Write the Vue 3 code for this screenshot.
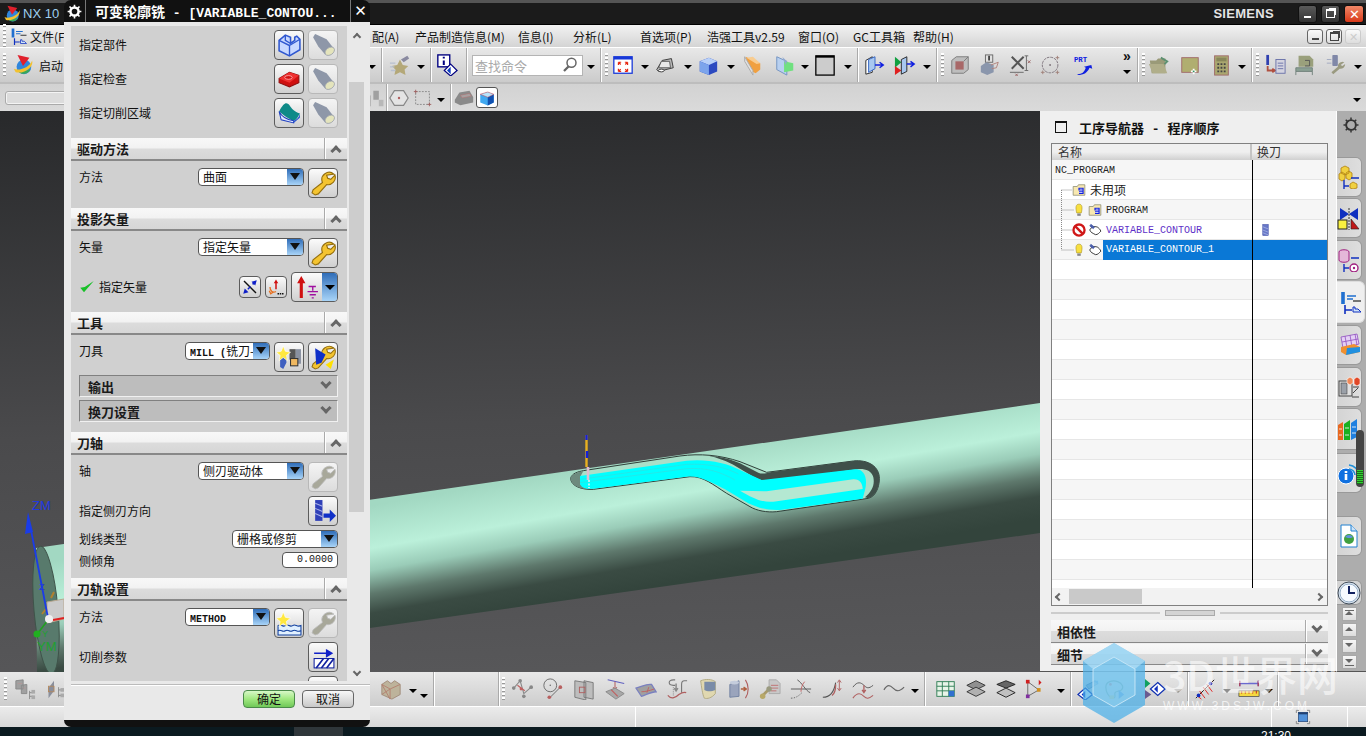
<template>
  <div class="app">
    <div class="top-strip"></div>
    <div class="titlebar">
      <svg class="nx-logo" viewBox="0 0 24 24" v-html="icons.logo"></svg>
      <span class="nx-name">NX 10</span>
      <span class="siemens">SIEMENS</span>
      <span class="win-btn"><i class="w-min"></i></span>
      <span class="win-btn"><i class="w-max"></i></span>
      <span class="win-btn close">✕</span>
    </div>

    <div class="menubar">
      <span class="ti handle tiw8"></span>
      <svg class="menu-ic" viewBox="0 0 24 24" v-html="icons.tabOps"></svg>
      <span v-for="m in menus" :key="m.t" class="menu-item" :style="{ width: m.w + 'px' }">{{ m.t }}</span>
      <span class="doc-btns">
        <span class="doc-btn"><i class="w-min dark"></i></span>
        <span class="doc-btn"><i class="w-max dark"></i></span>
        <span class="doc-btn off">✕</span>
      </span>
    </div>

    <div v-for="bar in topBars" :key="bar.cls" class="toolbar" :class="bar.cls">
      <span v-for="(it, i) in bar.items" :key="i" class="ti" :class="it.k" :style="{ width: it.w + 'px' }">
        <svg v-if="it.k === 'icon' || it.k === 'active'" viewBox="0 0 24 24" v-html="icons[it.n]"></svg>
        <template v-else-if="it.k === 'label'">{{ it.n }}</template>
        <template v-else-if="it.k === 'search'">
          查找命令
          <svg viewBox="0 0 24 24" v-html="icons.lens"></svg>
        </template>
        <template v-else-if="it.k === 'more'"><b>»</b><i class="caret-i"></i></template>
      </span>
    </div>

    <div class="main">
      <div class="viewport">
        <svg class="scene" viewBox="0 111 1040 561">
          <defs>
            <linearGradient id="cyl" gradientUnits="userSpaceOnUse" x1="540" y1="476" x2="562" y2="602">
              <stop offset="0" stop-color="#a2d8c2" />
              <stop offset=".33" stop-color="#bbf0da" />
              <stop offset=".5" stop-color="#9accb8" />
              <stop offset=".68" stop-color="#5e786c" />
              <stop offset=".83" stop-color="#3a4b43" />
              <stop offset="1" stop-color="#33443c" />
            </linearGradient>
          </defs>
          <path d="M36 548L1040 403V533L370 628L37 680Z" fill="url(#cyl)" />
          <ellipse cx="46" cy="610" rx="12" ry="64" transform="rotate(-5 46 610)" fill="#587a6c" stroke="#3f544a" />
          <g transform="translate(540 420) scale(.33333)">
            <path d="M92 175C95 160 115 155 130 152L420 108C480 100 540 105 600 125L680 157L940 123C985 118 1018 140 1018 175C1018 205 1005 230 985 235L710 275C680 278 650 272 630 260L560 220C520 195 490 168 450 170L160 208C125 210 92 198 92 175Z" fill="#a9dfc8" stroke="#2f3e38" stroke-width="3" />
            <path d="M505 107C545 110 575 118 600 130L655 158C668 164 680 158 700 155L940 123C985 118 1018 140 1018 175C1018 205 1005 230 985 235L975 232C995 215 1005 195 1000 172C995 150 970 145 950 148L700 182C675 185 660 180 640 170L590 140C560 122 530 112 505 107Z" fill="#3f504a" />
            <path d="M92 175C95 162 115 156 130 153L122 168L120 192L140 208C115 205 92 195 92 175Z" fill="#6d8a7e" />
            <path d="M120 168L440 122C500 116 560 128 600 150L665 180L945 148C970 146 985 170 975 210L968 236L720 270C680 272 650 262 625 250L555 208C520 190 480 165 440 170L160 206C140 208 122 205 120 190Z" fill="#00ffff" />
            <path d="M120 178L440 133C510 130 555 142 595 162M120 188L440 146C500 142 540 155 585 180" stroke="#58c8c8" stroke-width="1.2" fill="none" />
            <path d="M600 212L680 214L940 178C960 177 968 192 968 207L700 245C665 248 640 235 600 212Z" fill="#b4e8d2" />
          </g>
          <path d="M586.5 435V467" stroke="#e8b020" stroke-width="2.4" />
          <path d="M586.5 435v5M587 451v7" stroke="#1420d8" stroke-width="2.4" />
          <path d="M588 467v13" stroke="#e0bcd0" stroke-width="2.6" />
          <path d="M589 480v8" stroke="#f0f0f0" stroke-width="1.5" stroke-dasharray="2 1.5" />
          <path d="M47 602l17-3v20l-17 4z" fill="#cbcbcb" stroke="#b8a890" />
          <path d="M42 614l4-5M51 598l3-6" stroke="#b08030" stroke-width="2" />
          <path d="M53 620l11-2" stroke="#e02020" stroke-width="2" />
          <path d="M48 618L31 530" stroke="#1a3ce8" stroke-width="1.8" />
          <path d="M28 512l5 20-8 2z" fill="#1a3ce8" />
          <path d="M48 620l-10 13" stroke="#20a020" stroke-width="1.6" />
          <circle cx="37" cy="634" r="3.5" fill="#20b020" />
          <circle cx="49" cy="619" r="4" fill="#f0f0f0" />
          <text x="32" y="510" class="axis-t" fill="#2038e0">ZM</text>
          <text x="39" y="590" class="axis-s" fill="#2038e0">Z</text>
          <text x="42" y="637" class="axis-s" fill="#20a030">Y</text>
          <text x="37" y="651" class="axis-t" fill="#20a030">YM</text>
        </svg>
      </div>

      <div class="nav">
        <div class="nav-title"><i class="nav-pin"></i><b>工序导航器<span class="nav-dash"> - </span>程序顺序</b></div>
        <div class="tree">
          <div class="tree-head"><span class="th-name">名称</span><span class="th-tool">换刀</span></div>
          <div class="tree-body">
            <div v-for="n in 22" :key="n" class="tr"></div>
            <div class="tree-rows">
              <div class="row-t asc">NC_PROGRAM</div>
              <div class="row-t p20"><svg viewBox="0 0 24 24" v-html="icons.folder"></svg><span class="gap4 cn">未用项</span></div>
              <div class="row-t p20"><svg viewBox="0 0 24 24" v-html="icons.bulb"></svg><svg class="ml2" viewBox="0 0 24 24" v-html="icons.folder"></svg><span class="gap4 asc">PROGRAM</span></div>
              <div class="row-t p20"><svg viewBox="0 0 24 24" v-html="icons.nosign"></svg><svg class="ml2" viewBox="0 0 24 24" v-html="icons.opIcon"></svg><span class="gap4 asc purple">VARIABLE_CONTOUR</span><svg class="drill" viewBox="0 0 24 24" v-html="icons.drill"></svg></div>
              <div class="row-t p20"><svg viewBox="0 0 24 24" v-html="icons.bulb"></svg><svg class="ml2" viewBox="0 0 24 24" v-html="icons.opIcon"></svg><span class="sel asc">VARIABLE_CONTOUR_1</span></div>
            </div>
            <svg class="tree-lines" viewBox="0 0 40 100">
              <path d="M9.5 30V90M9.5 30H20M9.5 50H22M9.5 70H20M9.5 90H22" stroke="#8a8a8a" stroke-dasharray="1 1" fill="none" />
            </svg>
            <i class="col-line"></i>
          </div>
          <div class="hscroll"><span class="sb-left"></span><i class="hthumb"></i><span class="sb-right"></span></div>
        </div>
        <div class="splitter"><i></i><span></span><i></i></div>
        <div class="sec acc"><b>相依性</b><span class="sec-btn down"></span></div>
        <div class="sec acc a2"><b>细节</b><span class="sec-btn down"></span></div>
      </div>

      <div class="tabs">
        <svg class="tabs-gear" viewBox="0 0 24 24" v-html="icons.gearDark"></svg>
        <span v-for="t in tabs" :key="t.n" class="tab" :class="{ on: t.on, clock: t.n === 'clock' }" :style="{ height: t.h + 'px', marginTop: t.mt + 'px' }">
          <svg viewBox="0 0 24 24" v-html="icons[t.n]"></svg>
        </span>
        <span v-for="s in tabSteps" :key="s" class="step" :class="s"></span>
      </div>
    </div>

    <div v-for="bar in bottomBars" :key="bar.cls" class="toolbar" :class="bar.cls">
      <span v-for="(it, i) in bar.items" :key="i" class="ti" :class="it.k" :style="{ width: it.w + 'px' }">
        <svg v-if="it.k === 'icon'" viewBox="0 0 24 24" v-html="icons[it.n]"></svg>
      </span>
    </div>

    <div class="status">
      <span class="st s1"></span><span class="st s2"></span>
      <span class="st s3"><svg viewBox="0 0 24 24" v-html="icons.winSmall"></svg></span>
    </div>
    <div class="taskbar"><i class="task-tab"></i><span class="clock-t">21:30</span></div>

    <!-- floating dialog over the graphics window -->
    <div class="dialog">
      <div class="dlg-head">
        <span class="dlg-gear"><svg viewBox="0 0 24 24" v-html="icons.gearWhite"></svg></span>
        <span class="dlg-title"><span class="dt-cn">可变轮廓铣</span> - [VARIABLE_CONTOU...</span>
        <span class="dlg-close">✕</span>
      </div>
      <div class="dlg-body">
        <div class="dlg-mid">
          <div class="dlg-scroll">
            <div class="group g-first">
              <div class="row mid h31"><span class="lab">指定部件</span><span class="btn"><svg viewBox="0 0 24 24" v-html="icons.part"></svg></span><span class="btn off"><svg viewBox="0 0 24 24" v-html="icons.torch"></svg></span></div>
              <div class="row mid h31"><span class="lab">指定检查</span><span class="btn"><svg viewBox="0 0 24 24" v-html="icons.check"></svg></span><span class="btn off"><svg viewBox="0 0 24 24" v-html="icons.torch"></svg></span></div>
              <div class="row mid h31"><span class="lab">指定切削区域</span><span class="btn"><svg viewBox="0 0 24 24" v-html="icons.area"></svg></span><span class="btn off"><svg viewBox="0 0 24 24" v-html="icons.torch"></svg></span></div>
            </div>

            <div class="sec"><b>驱动方法</b><span class="sec-btn"></span></div>
            <div class="group">
              <div class="row h30"><span class="lab">方法</span><span class="sel-box w106">曲面</span><span class="btn"><svg viewBox="0 0 24 24" v-html="icons.wrench"></svg></span></div>
            </div>

            <div class="sec"><b>投影矢量</b><span class="sec-btn"></span></div>
            <div class="group">
              <div class="row h30"><span class="lab">矢量</span><span class="sel-box w106">指定矢量</span><span class="btn"><svg viewBox="0 0 24 24" v-html="icons.wrench"></svg></span></div>
              <div class="row mid h30">
                <span class="lab"><svg class="tick" viewBox="0 0 24 24" v-html="icons.tick"></svg>指定矢量</span>
                <span class="btn sm"><svg viewBox="0 0 24 24" v-html="icons.reverse"></svg></span>
                <span class="btn sm"><svg viewBox="0 0 24 24" v-html="icons.vecDots"></svg></span>
                <span class="btn split"><svg viewBox="0 0 24 24" v-html="icons.vecPlus"></svg><i class="split-arrow"></i></span>
              </div>
            </div>

            <div class="sec"><b>工具</b><span class="sec-btn"></span></div>
            <div class="group g3">
              <div class="row h30"><span class="lab">刀具</span><span class="sel-box w85"><span class="asc bold">MILL (</span>铣刀-</span><span class="btn"><svg viewBox="0 0 24 24" v-html="icons.toolNew"></svg></span><span class="btn"><svg viewBox="0 0 24 24" v-html="icons.toolEdit"></svg></span></div>
              <div class="sub"><b>输出</b><span class="sec-btn down bare"></span></div>
              <div class="sub"><b>换刀设置</b><span class="sec-btn down bare"></span></div>
            </div>

            <div class="sec"><b>刀轴</b><span class="sec-btn"></span></div>
            <div class="group">
              <div class="row h30"><span class="lab">轴</span><span class="sel-box w106">侧刃驱动体</span><span class="btn off"><svg viewBox="0 0 24 24" v-html="icons.wrenchGrey"></svg></span></div>
              <div class="row mid h30"><span class="lab">指定侧刃方向</span><span class="btn"><svg viewBox="0 0 24 24" v-html="icons.sideDir"></svg></span></div>
              <div class="row h18"><span class="lab">划线类型</span><span class="sel-box w106">栅格或修剪</span></div>
              <div class="row h16"><span class="lab">侧倾角</span><span class="num asc">0.0000</span></div>
            </div>

            <div class="sec"><b>刀轨设置</b><span class="sec-btn"></span></div>
            <div class="group">
              <div class="row h30"><span class="lab">方法</span><span class="sel-box w85"><span class="asc bold">METHOD</span></span><span class="btn"><svg viewBox="0 0 24 24" v-html="icons.methodNew"></svg></span><span class="btn off"><svg viewBox="0 0 24 24" v-html="icons.wrenchGrey"></svg></span></div>
              <div class="row mid h30"><span class="lab">切削参数</span><span class="btn"><svg viewBox="0 0 24 24" v-html="icons.cutParam"></svg></span></div>
              <div class="row h30"><span class="lab"></span><span class="btn"></span></div>
            </div>
          </div>
          <div class="dlg-sb">
            <span class="sb-up"></span>
            <i class="sb-thumb"></i>
            <span class="sb-down"></span>
          </div>
        </div>
        <div class="dlg-foot">
          <span class="act ok">确定</span>
          <span class="act">取消</span>
        </div>
      </div>
    </div>

    <div class="handle-float"><i></i></div>

    <div class="watermark">
      <svg class="wm-logo" viewBox="0 0 62 80">
        <path d="M31 0L62 18V62L31 80L0 62V18Z" fill="#4aaee8" fill-opacity=".72" />
        <path d="M31 14L52 26V52L31 64L10 52V26Z" fill="#8fd0f0" fill-opacity=".6" stroke="#e4f4fc" stroke-opacity=".7" />
        <path d="M31 0L62 18L52 26L31 14L10 26L0 18Z" fill="#bfe6f8" fill-opacity=".6" />
      </svg>
      <div class="wm-text">
        <div class="wm-big">3D世界网</div>
        <div class="wm-small">WWW.3DSJW.COM</div>
      </div>
    </div>
  </div>
</template>

<script setup>
const ic = (n, w) => ({ k: 'icon', n, w })
const gap = (w) => ({ k: 'gap', w })
const caret = { k: 'caret', w: 8 }
const sep = { k: 'sep', w: 2 }
const handle = { k: 'handle', w: 8 }

// widths run from one menu title to the next
const menus = [
  { t: '文件(F)', w: 342 }, { t: '配(A)', w: 43 }, { t: '产品制造信息(M)', w: 103 }, { t: '信息(I)', w: 55 },
  { t: '分析(L)', w: 67 }, { t: '首选项(P)', w: 67 }, { t: '浩强工具v2.59', w: 91 }, { t: '窗口(O)', w: 55 },
  { t: 'GC工具箱', w: 60 }, { t: '帮助(H)', w: 50 }
]

const topBars = [
  {
    cls: 'tb1',
    items: [
      handle, ic('logo', 30), { k: 'label', n: '启动', w: 30 }, gap(300), caret, gap(5), sep,
      ic('star', 34), caret, gap(5), sep, ic('infoDiamond', 30), gap(4), sep, gap(4),
      { k: 'search', w: 111 }, gap(4), caret, gap(5), sep, handle,
      ic('fit', 26), gap(5), caret, ic('shade', 32), gap(3), caret, ic('cube', 32), gap(3), caret,
      ic('clip', 34), ic('section', 32), caret, ic('square', 32), gap(3), caret, gap(5), sep,
      ic('planeArrow', 32), ic('planeArrow2', 28), gap(4), caret, gap(5), sep, handle,
      ic('wireCube', 28), ic('infoBox', 32), ic('measure', 28), ic('circleDots', 34), ic('prt', 32), gap(23),
      { k: 'more', w: 8 }, gap(6), sep, handle,
      ic('folderOpen', 24), ic('rectPlus', 38), ic('calc', 24), gap(5), caret, gap(5), sep, handle,
      ic('listArrow', 28), ic('machine', 32), ic('toolsGrey', 30), gap(3), caret
    ]
  },
  {
    cls: 'tb2',
    items: [
      gap(5), { k: 'input', w: 70 }, gap(293), ic('frag', 18), sep, ic('hex', 22), ic('dotRect', 26), gap(1), caret, gap(5), sep,
      ic('greyBox', 24), { k: 'active', n: 'blueBox', w: 22 }, gap(855), caret
    ]
  }
]

const w31 = ['pts', 'lineCircle', 'planes', 'arrowPlane', 'surfaceArrow', 'sCurve', 'tube', 'cylArrow', 'keyDoc', 'crossCurve', 'curveArrows', 'waveArrow', 'wave']

const bottomBars = [
  {
    cls: 'tb3',
    items: [
      gap(1), handle, ic('blocksTree', 32), ic('toolTree', 26), gap(313), ic('crate', 22), gap(7), caret, gap(3), { k: 'caret low', w: 8 }, gap(5), sep, gap(63), sep,
      { k: 'handle', w: 6 }, ...w31.map((n) => ic(n, 31)), gap(2), caret, gap(5), sep, gap(5),
      ic('table3d', 30), ic('planeStack', 30), ic('planeStack2', 30), ic('nodes', 30), gap(6), caret, gap(5), sep, gap(1),
      ic('sliderDiamond', 30), ic('palette', 24), gap(16), ic('playDiamond', 24), gap(7), { k: 'caret grey', w: 8 }, gap(5), sep,
      ic('hatchLine', 32), gap(2), caret, gap(6), ic('ruler', 24), gap(4), caret, gap(4), sep
    ]
  }
]

const tabs = [
  { n: 'tabAssy', h: 40, mt: 0 }, { n: 'tabMirror', h: 40, mt: 1 }, { n: 'tabGeom', h: 40, mt: 2 },
  { n: 'tabOps', h: 42, mt: 1, on: true }, { n: 'tabMat', h: 40, mt: 2 }, { n: 'tabMach', h: 40, mt: 2 },
  { n: 'tabBooks', h: 42, mt: 1 }, { n: 'tabInfo', h: 40, mt: 3 }, { n: 'tabDoc', h: 40, mt: 23 },
  { n: 'clock', h: 25, mt: 24 }
]
const tabSteps = ['first', 'up', 'down', 'last']

const wrenchPath = 'M22 3a7 7 0 0 0-11 8L2 18l-1 3 3 2 3-1 8-9a7 7 0 0 0 8-9l-4 4-3-1-1-3z'

const icons = {
  logo: '<circle cx="13" cy="14" r="8" fill="#2f86dc"/><path d="M6 18a8 8 0 0 0 14-1c-4 1-9 2-14 1z" fill="#3aa858"/><path d="M2 16C8 19 20 14 22 7c2 7-8 15-18 13z" fill="#f2c230"/><path d="M6 1l13 3-7 9z" fill="#e0202c"/>',
  lens: '<circle cx="14" cy="9" r="6" fill="#fff" stroke="#666" stroke-width="2"/><path d="M10 14l-6 6" stroke="#666" stroke-width="3"/>',
  star: '<path d="M12 6l3 6 6 1-4 4 1 6-6-3-6 3 1-6-4-4 6-1z" fill="#b4a878"/><path d="M13 6l7-4 2 3-6 4z" fill="#8a8aa0"/><path d="M1 10h6M1 14h5M2 18h5" stroke="#b8c0d0" stroke-width="1.5"/>',
  infoDiamond: '<rect x="2" y="1" width="13" height="13" fill="#fff" stroke="#000080" stroke-width="1.5"/><path d="M8.5 3v2M8.5 7v5" stroke="#000080" stroke-width="2.2"/><path d="M16 11l7 7-7 6-7-6z" fill="#fff" stroke="#000080" stroke-width="1.3"/><path d="M16 14v8l-4-4z" fill="#1040c0"/>',
  fit: '<rect x="2" y="3" width="20" height="18" fill="#fff" stroke="#1838d8" stroke-width="1.4"/><rect x="2" y="3" width="20" height="3" fill="#1838d8"/><path d="M7 9l2.5 2.5M7 9v3M7 9h3M17 9l-2.5 2.5M17 9v3M17 9h-3M7 19l2.5-2.5M7 19v-3M7 19h3M17 19l-2.5-2.5M17 19v-3M17 19h-3" stroke="#e82810" stroke-width="1.3" fill="none"/>',
  shade: '<path d="M3 17l6-10 10-2 2 10-16 4z" fill="#bbb" stroke="#333"/><path d="M8 8h9l1 7H5z" fill="#e8e8e8" stroke="#555"/><ellipse cx="8" cy="18" rx="3" ry="1.5" fill="#fff" stroke="#333"/>',
  cube: '<path d="M3 8l10-4 9 4v11l-9 4-10-4z" fill="#2c4ac0"/><path d="M3 8l10-4 9 4-9 4z" fill="#b8d0f8"/><path d="M3 8l10 4v11l-10-4z" fill="#7ca4ec"/>',
  clip: '<path d="M5 3l16 7v7l-5 4-6-3z" fill="#f0a040"/><path d="M6 4L13 3l8 7-4 1z" fill="#f8cc90"/><path d="M4 3l9 15v5l-9-15z" fill="#e0e0e0" stroke="#aaa"/>',
  section: '<path d="M3 3l11 5v15l-11-6z" fill="#b8d0f0" stroke="#7090c0"/><path d="M11 8l10 2v8l-10 2z" fill="#70e080"/><path d="M9 3l5 5-1 4z" fill="#90a8d0"/>',
  square: '<rect x="2" y="2" width="20" height="21" fill="#ccc" stroke="#000" stroke-width="1.4"/><rect x="2" y="2" width="20" height="2" fill="#000"/>',
  planeArrow: '<path d="M2 7l7-4v17l-7 2z" fill="#fff" stroke="#222"/><path d="M5 6l7-3v13l-7 4z" fill="#a8c8f0" stroke="#3060c0"/><path d="M12 12h8M17 9l4 3-4 3" stroke="#1020e0" stroke-width="1.6" fill="none"/>',
  planeArrow2: '<path d="M1 3l7 6-7 6z" fill="#10a040"/><path d="M1 13l7 5-7 5z" fill="#e02020"/><path d="M8 6l6-3v16l-6 3z" fill="#a8c8f0" stroke="#222"/><path d="M14 11h8M18 8l4 3-4 3" stroke="#1020e0" stroke-width="1.6" fill="none"/>',
  wireCube: '<path d="M3 7l5-4h13v14l-5 4H3z" fill="#bdbdbd" stroke="#7a7a7a"/><path d="M7 8h9v9H7z" fill="#a86868"/><path d="M16 8l5-5" stroke="#7a7a7a"/>',
  infoBox: '<rect x="7" y="1" width="8" height="8" fill="#e0e0e0" stroke="#666"/><path d="M11 2v5" stroke="#444" stroke-width="2"/><path d="M2 13l6-4 8 3v8l-7 3-7-3z" fill="#8a96ac"/><path d="M13 12l8-3-2 6-5 1" fill="none" stroke="#b08078"/>',
  measure: '<path d="M3 3l13 13M16 3L3 16" stroke="#555" stroke-width="2.2"/><path d="M19 2v16M17 2h4M17 18h4" stroke="#666" fill="none"/><path d="M1 20h15" stroke="#666"/><path d="M20.5 7l3 3M23.5 7l-3 3M7 21.5l2.5 2.5M9.5 21.5L7 24" stroke="#9a6060"/>',
  circleDots: '<circle cx="11" cy="12" r="8.5" fill="none" stroke="#7a7078" stroke-dasharray="3 1"/><circle cx="11" cy="12" r="1" fill="#7a7078"/><path d="M19 2v4M17 4h4M19 18v4M17 20h4M3 18v4M1 20h4" stroke="#a08078"/>',
  prt: '<text x="1" y="9" font-size="8" font-weight="700" fill="#1020e0" font-family="Liberation Mono">PRT</text><path d="M5 22c5 0 7-2 9-7l-2-1 8-2 1 4-3-1c-2 5-6 8-13 8z" fill="#1020e0"/>',
  folderOpen: '<path d="M2 7h7l2-2h8v16H4z" fill="#9a9a78"/><path d="M1 11h16l4 10H5z" fill="#b0ae8a"/><path d="M14 4l7 4-3 3" stroke="#5d9070" stroke-width="2" fill="none"/>',
  rectPlus: '<rect x="3" y="4" width="18" height="16" fill="#b0ae70" stroke="#a06a6a"/><path d="M16 16v6M13 19h6" stroke="#fff" stroke-width="2"/><circle cx="16" cy="19" r="1" fill="#309060"/>',
  calc: '<rect x="5" y="2" width="15" height="21" fill="#aaa770" stroke="#a06a6a"/><rect x="7" y="4" width="11" height="4" fill="#88865a"/><path d="M8 11h9M8 15h9M8 19h9" stroke="#444" stroke-width="2" stroke-dasharray="2 1.5"/>',
  listArrow: '<path d="M4 1v11" stroke="#3040b0" stroke-width="3"/><path d="M4 13v5h7M9 16l3 2-3 2" stroke="#b05040" stroke-width="2" fill="none"/><rect x="13" y="6" width="10" height="15" fill="#d4d4e0" stroke="#6870a8"/><path d="M15 10h6M15 13h6M15 16h6" stroke="#6870a8"/>',
  machine: '<path d="M5 2h12l4 4v8H5z" fill="#9aa07c"/><path d="M2 15h18v4H2zM2 19v4M20 19v4" fill="#8aa094" stroke="#70807a"/><path d="M12 7h5v6h-5" fill="none" stroke="#555"/>',
  toolsGrey: '<rect x="8" y="1" width="6" height="12" rx="1" fill="#8088a8"/><path d="M2 6h5M2 10h5" stroke="#a0a8c0"/><path d="M21 9a5 5 0 0 0-7 5l-7 6 2 2 7-6a5 5 0 0 0 6-5l-3 2-2-1z" fill="#9a9a80"/>',
  frag: '<path d="M8 4h6v10H8zM0 12l5-3v12H0z" fill="#a0a0a0"/><path d="M14 14h5v7h-5z" fill="#b8b8b8"/>',
  hex: '<path d="M7 4h10l5 8-5 8H7l-5-8z" fill="#e4e4e4" stroke="#888" stroke-width="1.3"/><circle cx="12" cy="12" r="1.3" fill="#b06060"/>',
  dotRect: '<rect x="4" y="5" width="15" height="14" fill="none" stroke="#888" stroke-dasharray="2 1.4"/><path d="M4 3v4M2 5h4M19 17v4M17 19h4" stroke="#a06060"/>',
  greyBox: '<path d="M2 14l5-8 11-2 4 7v6l-14 3-6-3z" fill="#8a8a8a"/><path d="M8 9l10-2 2 3-10 2z" fill="#a8a0a0" stroke="#b07070" stroke-width=".6"/>',
  blueBox: '<path d="M3 7l10-3 8 3v11l-8 4-10-4z" fill="#40a8f0"/><path d="M13 11l8-4v11l-8 4z" fill="#1050b0"/><path d="M3 7l10 4 8-4-8-3z" fill="#b8e4fc" stroke="#e03030" stroke-width=".6"/>',
  tabAssy: '<path d="M4 3l4-2 4 2v5l-4 2-4-2zM9 8l3-2 3 2v5l-3 2-3-2zM2 9l3-2 3 2v5l-3 2-3-2z" fill="#f0d040" stroke="#b08010" stroke-width=".8"/><path d="M14 13h8M7 15v9M7 21h5" stroke="#1030c0" stroke-width="1.4" fill="none"/><path d="M13 19l3-2 4 2v4l-4 1-3-1z" fill="#f0d040" stroke="#b08010" stroke-width=".8"/>',
  tabMirror: '<path d="M3 2l9 6-9 6zM21 2l-9 6 9 6z" fill="#1030c0"/><path d="M12 2v22" stroke="#333" stroke-dasharray="2 1"/><rect x="1" y="14" width="9" height="9" fill="#f8f040" stroke="#222"/><path d="M14 23V13l8 10z" fill="#c01818" stroke="#222" stroke-width=".6"/>',
  tabGeom: '<path d="M2 4c0-3 10-3 10 0v8c0 3-10 3-10 0z" fill="#e4b8d8" stroke="#a02080"/><path d="M14 10h8M7 16v8M7 20h5" stroke="#1030c0" stroke-width="1.4" fill="none"/><circle cx="17" cy="20" r="4" fill="#fff" stroke="#a02080" stroke-width="1.4"/><circle cx="17" cy="20" r="1.2" fill="#a02080"/>',
  tabOps: '<path d="M4 2v12" stroke="#2070d0" stroke-width="3.6"/><path d="M8 6h9M8 9h6" stroke="#2070d0" stroke-width="1.6"/><path d="M14 11h8" stroke="#222" stroke-width="1.2"/><path d="M6 15v9M6 20h7" stroke="#1030c0" stroke-width="1.6" fill="none"/><path d="M14 17v5h8l-3-3h-3v-2z" fill="#d0e4f8" stroke="#1030c0" stroke-width="1"/>',
  tabMat: '<path d="M4 4l16-3 2 10-16 4z" fill="#e4d0f4" stroke="#9050c0" stroke-width=".8"/><path d="M8 3l2 12M13 2l2 12M18 1l2 11M5 9l16-3" stroke="#9050c0" stroke-width=".8"/><path d="M4 14l13-3 6 3v5l-14 3-5-3z" fill="#f09030"/><path d="M10 15l13-1v5L9 22z" fill="#2090e0"/>',
  tabMach: '<rect x="2" y="6" width="13" height="15" fill="#e0e0e0" stroke="#444"/><rect x="4" y="8" width="6" height="11" fill="#9aa0a8" stroke="#444" stroke-width=".6"/><path d="M17 4l3-2 3 2v5l-3 2-3-2z" fill="#e04828" stroke="#fff" stroke-width=".6"/><path d="M10 4l3-2 3 2v4l-3 2-3-2z" fill="#f08858" stroke="#fff" stroke-width=".6"/><path d="M16 12h6M16 18l5-5M15 22h7" stroke="#444" fill="none"/>',
  tabBooks: '<path d="M1 8l5-3v18H1z" fill="#e86820"/><path d="M7 7l6-4v20H7z" fill="#18b020"/><path d="M14 6l6-4v18l-6 3z" fill="#2080e0"/><path d="M2 12h3M2 18h3M8 11h4M8 18h4M15 10h4M15 16h4" stroke="#fff" stroke-width=".8"/>',
  tabInfo: '<circle cx="9" cy="15" r="8" fill="#1070e0" stroke="#fff"/><path d="M9 10v2M9 13v6" stroke="#fff" stroke-width="2.6"/><path d="M12 4a11 11 0 0 1 10 10M12 8a7 7 0 0 1 6 6" stroke="#2090d8" stroke-width="1.6" fill="none"/>',
  tabDoc: '<path d="M4 1h10l6 6v16H4z" fill="#fff" stroke="#2080d0"/><path d="M14 1v6h6" fill="#cfe4f8" stroke="#2080d0"/><circle cx="12" cy="15" r="5" fill="#40a040"/><path d="M8 13a5 5 0 0 1 8 0l-2 1h-3z" fill="#6090e0"/>',
  clock: '<circle cx="12" cy="12" r="11" fill="#dbe6f2" stroke="#3f4b58"/><circle cx="12" cy="12" r="9" fill="#f6faff" stroke="#98b0c8"/><path d="M12 5v7h6" stroke="#102060" stroke-width="2" fill="none"/>',
  folder: '<path d="M2 6h7l2-3h11v18H2z" fill="#f8e8b0" stroke="#8a8a70" stroke-width="1.3"/><path d="M13 9h6v9h-6" fill="#fff"/><path d="M12 9h7v3h-7zM12 15h7v3h-7M19 9v9" fill="none" stroke="#1020e0" stroke-width="2"/>',
  bulb: '<path d="M8 17C6 8 6 2 12 2s6 6 4 15z" fill="#f8e040" stroke="#a89020"/><rect x="9" y="18" width="6" height="4" fill="#888"/>',
  nosign: '<circle cx="12" cy="12" r="9.5" fill="#fff" stroke="#d01818" stroke-width="4"/><path d="M5 5l14 14" stroke="#d01818" stroke-width="4"/>',
  opIcon: '<path d="M3 12c2-5 8-7 13-5 2 1 5 4 6 7-3 3-5 6-9 6-4-2-9-4-10-8z" fill="#fff" stroke="#222" stroke-width="1.5"/><path d="M5 2l6 5-2 3-6-5z" fill="#5060b0" stroke="#204090" stroke-width=".8"/>',
  drill: '<rect x="7" y="2" width="10" height="20" fill="#6878c8" stroke="#3040a0"/><path d="M7 6l10 4M7 12l10 4M7 17l10 4" stroke="#c8d0f0"/>',
  gearWhite: '<circle cx="12" cy="12" r="6.5" fill="none" stroke="#fff" stroke-width="4"/><path d="M12 1v4M12 19v4M1 12h4M19 12h4M4 4l3 3M17 17l3 3M4 20l3-3M17 7l3-3" stroke="#fff" stroke-width="2.6"/>',
  gearDark: '<circle cx="12" cy="12" r="6.5" fill="none" stroke="#333" stroke-width="2.6"/><path d="M12 2v3M12 19v3M2 12h3M19 12h3M5 5l2 2M17 17l2 2M5 19l2-2M17 7l2-2" stroke="#333" stroke-width="2"/>',
  part: '<path d="M2 8l6-5 5 2v6l4-3V5l2-1 3 3v10l-10 6-10-5z" fill="#c8d8ff" stroke="#3058d0" stroke-width="1.5"/><path d="M2 8l10 5v10M12 13l10-6M13 11l-5-3V3" fill="none" stroke="#3058d0" stroke-width="1.3"/>',
  check: '<path d="M2 12l10-6 9 3v7l-9 4-10-4z" fill="#d01010" stroke="#901010"/><path d="M2 12l10 4 9-7-9-3z" fill="#f03030"/><ellipse cx="11" cy="11" rx="3.6" ry="1.8" fill="#d01010" stroke="#ffb0b0" stroke-width=".8"/>',
  area: '<path d="M2 11c5-9 7-9 10-6 2 3 4 6 10 8-2 3-3 6-6 7-3-1-8-4-14-9z" fill="#0e8a88"/><path d="M2 11c3 6 8 8 14 9v2L4 19z" fill="#e0e8ff" stroke="#2040c0" stroke-width="1"/><path d="M16 20c3-1 5-3 6-7v4l-6 5z" fill="#3058d0"/>',
  torch: '<path d="M2 5l2-3 11 5 7 9-8 6-7-8z" fill="#8e97a8"/><ellipse cx="18" cy="18.5" rx="5" ry="3.4" transform="rotate(-35 18 18.5)" fill="#e4e4bc" stroke="#a0a6ae" stroke-width=".8"/>',
  wrench: `<path d="${wrenchPath}" fill="#f4c430" stroke="#96700f" stroke-width="1.1"/>`,
  wrenchGrey: `<path d="${wrenchPath}" fill="#a8a89a" stroke="#bcbcbc" stroke-width=".8"/>`,
  tick: '<path d="M3 13l5 6L21 4 9 12z" fill="#18c028"/>',
  reverse: '<path d="M4 4l16 16" stroke="#111" stroke-width="1.8"/><path d="M21 3l-2 7-5-5zM3 21l2-7 5 5z" fill="#1020c8"/><path d="M19 5L5 19" stroke="#1020c8" stroke-width="2" stroke-dasharray="5 4"/>',
  vecDots: '<path d="M12 2l3 5h-2v8h-2V7H9z" fill="#d01010"/><path d="M4 12c0 6 4 8 8 6M3 17l2 4 3-2" stroke="#e87020" stroke-width="1.8" fill="none"/><path d="M14 21h2M17 21h2M20 21h2" stroke="#111" stroke-width="2"/>',
  vecPlus: '<path d="M7 1l4 7H8.5v14h-3V8H3z" fill="#d01010"/><path d="M14 11h7M18 11v4M13 16h10M15 19h6M17 22h2" stroke="#a010a0" stroke-width="1.3" fill="none"/>',
  toolNew: '<path d="M12 4h6v10h-6z" fill="#555"/><path d="M18 4h5v14h-5z" fill="#8890a0"/><rect x="13" y="13" width="7" height="7" fill="#f0b860" stroke="#333"/><path d="M3 10h6v7l-3 6-3-2z" fill="#4060c0"/><path d="M6 1l2 5 5 1-4 3 1 5-4-3-4 3 1-5-4-3 5-1z" fill="#ffe840" stroke="#fff" stroke-width=".6"/>',
  toolEdit: `<path d="${wrenchPath}" fill="#f4c430" stroke="#96700f"/><path d="M4 3l10 6-4 8-5 2z" fill="#1030c8"/><path d="M22 14l-8 5 5 4z" fill="#ffe000"/>`,
  sideDir: '<rect x="4" y="1" width="7" height="20" fill="#3040b8"/><path d="M4 4l7 3M4 9l7 3M4 14l7 3" stroke="#a8b0e8"/><path d="M12 14h6v-4l6 6-6 6v-4h-6z" fill="#1030c8"/>',
  methodNew: '<path d="M1 14c3-2 4 2 7 0s4 2 7 0 4 2 8 0v9H1z" fill="#e0f0ff" stroke="#1040a0"/><path d="M1 19c3-2 4 2 7 0s4 2 7 0 4 2 8 0" fill="none" stroke="#1040a0"/><path d="M6 1l2 5 5 1-4 3 1 5-4-3-4 3 1-5-4-3 5-1z" fill="#ffe840" stroke="#fff" stroke-width=".6"/>',
  cutParam: '<path d="M3 8h16M15 5l5 3-5 3z" stroke="#1020c8" stroke-width="1.4" fill="#1020c8"/><rect x="3" y="13" width="19" height="9" fill="#fff" stroke="#1020a0"/><path d="M5 22l7-9M10 22l7-9M15 22l7-9" stroke="#1020a0" stroke-width="1.6"/>',
  winSmall: '<path d="M2 6V2h4M18 2h4v4M22 18v4h-4M6 22H2v-4" stroke="#888" fill="none" stroke-width="1.4"/><rect x="5" y="5" width="14" height="14" fill="#5090d8" stroke="#204070"/><rect x="5" y="5" width="14" height="3" fill="#204070"/>',
  blocksTree: '<path d="M2 3l8-1v10H2zM8 8l6-1v10H8z" fill="#a0a0a0" stroke="#888"/><path d="M4 6h5M10 11h3" stroke="#b09898"/><path d="M17 14v9M17 16h4M17 20h4" stroke="#888" fill="none"/><rect x="19" y="13" width="4" height="4" fill="#aaa"/><rect x="19" y="19" width="4" height="4" fill="#aaa"/>',
  toolTree: '<path d="M6 11l6-8v11l-6 8z" fill="#8a8f9c"/><rect x="6" y="9" width="6" height="6" fill="none" stroke="#b08860"/><path d="M17 10v11M17 13h4M17 19h4" stroke="#888" fill="none"/><rect x="19" y="11" width="4" height="4" fill="#aaa"/><rect x="19" y="17" width="4" height="4" fill="#aaa"/>',
  crate: '<path d="M2 7l6-4 4 3 4-3 6 4v11l-9 5-11-5z" fill="#bdb39b" stroke="#a08a78"/><path d="M2 7l9 5v11M11 12l11-5M2 7l9 16M2 18l9-6" fill="none" stroke="#b48070"/>',
  pts: '<path d="M3 11l7-8 4 14 8-7" fill="none" stroke="#888" stroke-width="1.2"/><path d="M7 8l8 6" stroke="#c06060" stroke-width="1.3"/><circle cx="3" cy="11" r="2" fill="#888"/><circle cx="10" cy="3" r="2" fill="#888"/><circle cx="14" cy="20" r="2" fill="#888"/><circle cx="22" cy="10" r="2" fill="#888"/><circle cx="11" cy="12" r="1.6" fill="#c06060"/>',
  lineCircle: '<circle cx="9" cy="8" r="7" fill="none" stroke="#666"/><circle cx="9" cy="8" r=".8" fill="#666"/><path d="M8 22l12-12" stroke="#666"/><circle cx="8" cy="21" r="2" fill="#b86060"/><circle cx="20" cy="10" r="2" fill="#b86060"/>',
  planes: '<path d="M2 3l12 2v19l-12-3zM12 3l10 2v18l-10-2z" fill="#bdbdbd" stroke="#777"/><rect x="7" y="10" width="6" height="6" fill="none" stroke="#b06060"/>',
  arrowPlane: '<path d="M4 2l18 4" stroke="#6060c0" stroke-width="1.2"/><path d="M12 4v8M10 10l2 3 2-3" stroke="#b05050" fill="none"/><path d="M2 15l10-4 10 6-9 6z" fill="#a8a8a8" stroke="#888"/><path d="M8 13l7 7" stroke="#c06060" stroke-width="1.3"/>',
  surfaceArrow: '<path d="M1 11c7-2 12-5 17-4l5 8c-5 0-10 3-16 5z" fill="#a0a0a0" stroke="#7a80c0" stroke-width="1.4"/><path d="M7 15c4 0 8-1 14-3M13 16l2-6" stroke="#c06060" fill="none"/>',
  sCurve: '<path d="M8 2c-6 0-6 6 0 6M8 2h2M8 8h2M20 3c-3 0-3 2-3 4v9M23 3h-3" fill="none" stroke="#777" stroke-width="1.2"/><path d="M2 19c4 5 9 2 12-1 3-2 6-3 8-2" fill="none" stroke="#b06060" stroke-width="1.4"/><path d="M11 6v7M9 11l2 3 2-3" stroke="#888" fill="none" stroke-width="1.6"/><path d="M8 10v9" stroke="#888" stroke-dasharray="1 1"/>',
  tube: '<path d="M4 3c5-2 12-2 16 1v13c-4 5-9 6-12 5-2-4-3-12-4-19z" fill="#e0d8b0" stroke="#b0a880"/><path d="M8 4h12v9c-4 2-9 2-12 0z" fill="#7a8ca8"/>',
  cylArrow: '<path d="M2 7l10-4v17l-10 1z" fill="#9aa4bc" stroke="#7080a0"/><ellipse cx="7" cy="5" rx="5" ry="2" fill="#c4ccdc"/><path d="M14 12h5M17 10l3 2-3 2" stroke="#b06040" stroke-width="1.5" fill="none"/><path d="M19 2c4 6 4 14 0 20" stroke="#b06060" stroke-width="1.2" fill="none"/>',
  keyDoc: '<path d="M11 2h8l4 4v11H11z" fill="#c8c8c8" stroke="#aaa"/><path d="M13 8h8M13 11h8M13 14h6" stroke="#c07070"/><path d="M10 13l-6 6" stroke="#a89a6a" stroke-width="3"/><circle cx="4" cy="20" r="3" fill="#b8a868"/><circle cx="11" cy="12" r="3" fill="#9a9a80"/>',
  crossCurve: '<path d="M1 12h22" stroke="#555"/><path d="M8 2c5 3 9 12 14 14" fill="none" stroke="#555"/><path d="M16 4c-3 3-4 8-4 11" fill="none" stroke="#c06060"/><path d="M1 22c5 0 8-2 12-6" fill="none" stroke="#666" stroke-dasharray="1.5 1.5"/>',
  curveArrows: '<path d="M2 21c6 0 12-4 14-16" fill="none" stroke="#555" stroke-width="1.2"/><path d="M12 19c3-2 4-5 4-12" fill="none" stroke="#b06060" stroke-width="1.4"/><path d="M20 3v10M18 5l2-3 2 3M18 11l2 3 2-3" fill="none" stroke="#b06060"/>',
  waveArrow: '<path d="M1 10c5-7 9-5 12-2s5 4 10 0" fill="none" stroke="#555"/><path d="M1 22c5-7 9-5 12-2s5 3 10-1" fill="none" stroke="#b06060" stroke-width="1.2"/><path d="M13 8v8M11 13l2 3 2-3" stroke="#b06060" stroke-width="1.4" fill="none"/>',
  wave: '<path d="M1 13c4-7 7-5 10-2s6 5 12-1" fill="none" stroke="#666" stroke-width="1.3"/>',
  table3d: '<rect x="2" y="4" width="19" height="16" fill="#e8f4e8" stroke="#2e7d54"/><path d="M2 9h19M2 14h19M8 4v16M15 4v16" stroke="#2e7d54"/><rect x="15" y="14" width="6" height="6" fill="#3070d0"/>',
  planeStack: '<path d="M2 8l10-5 10 5-10 5z" fill="#909090" stroke="#333"/><path d="M2 15l10-5 10 5-10 5z" fill="#b0b0b0" stroke="#333"/>',
  planeStack2: '<path d="M2 7l10-4 10 4-10 4z" fill="#666" stroke="#222"/><path d="M2 16l10-5 10 5-10 5z" fill="#c0c0c0" stroke="#222"/>',
  nodes: '<path d="M3 4l12 9M3 4v16M3 20l12-7" stroke="#666" fill="none"/><rect x="1" y="2" width="4" height="4" fill="#d02020"/><rect x="13" y="11" width="4" height="4" fill="#d09020"/><rect x="1" y="18" width="4" height="4" fill="#8030a0"/><path d="M15 2l3 3-3 3z" fill="#d02020"/>',
  sliderDiamond: '<path d="M10 8l10-5 3 3-10 6z" fill="#9ab0c8" stroke="#6888a8"/><path d="M18 3h5v4" fill="#3080d0"/><path d="M9 11l8 7-8 6-8-6z" fill="#fff" stroke="#1030b0" stroke-width="1.4"/><path d="M9 14v8l-4-4z" fill="#1030c0"/>',
  palette: '<path d="M2 10c0-6 7-8 13-6 5 2 7 6 4 9-2 2-6 1-7 3s2 6-3 6C5 21 2 15 2 10z" fill="none" stroke="#508060" stroke-width="1.3"/><circle cx="7" cy="7" r="1.5" fill="#e04030"/><path d="M16 13l6 5-6 5z" fill="#1060d0"/><rect x="6" y="19" width="5" height="4" fill="#e8c040"/>',
  playDiamond: '<path d="M1 1l6 5-6 5z" fill="#10a060"/><path d="M1 13l7 5-7 5z" fill="#6a5a90"/><path d="M15 5l8 7-8 7-8-7z" fill="#fff" stroke="#1030b0" stroke-width="1.4"/><path d="M15 8v8l-4-4z" fill="#1030c0"/>',
  hatchLine: '<path d="M2 22L22 2" stroke="#111"/><path d="M6 14l6 8M10 10l6 8M14 7l6 8M3 19l5 4" stroke="#e02020"/><circle cx="5" cy="19" r="2" fill="#1030c0"/><circle cx="18" cy="6" r="2" fill="#1030c0"/>',
  ruler: '<path d="M2 6h20M2 3v6M22 3v6" stroke="#6a6ad0" stroke-width="1.4" fill="none"/><path d="M2 3v6M22 3v6" stroke="#c02020"/><rect x="1" y="14" width="22" height="6" fill="#f4d840" stroke="#333" stroke-width=".7"/><path d="M4 14v3M8 14v3M12 14v3M16 14v3M20 14v3" stroke="#c02020"/>'
}
</script>

<style>
html,
body {
  margin: 0;
  background: #222;
}
</style>

<style scoped>
.app {
  position: relative;
  display: flex;
  flex-direction: column;
  width: 1366px;
  height: 736px;
  overflow: hidden;
  background: #333;
  font-family: "Noto Sans CJK SC", "Liberation Sans", sans-serif;
  font-size: 12px;
  color: #111;
}

.asc {
  font-family: "Liberation Mono", "Noto Sans CJK SC", monospace;
  font-size: 10px;
}
.bold {
  font-weight: 700;
}

.top-strip {
  height: 3px;
  background: #555;
}
.titlebar {
  display: flex;
  align-items: center;
  height: 22px;
  background: #1b1b1b;
  border-bottom: 1px solid #000;
  box-sizing: border-box;
  color: #fff;
}
.nx-logo {
  width: 18px;
  height: 18px;
  margin-left: 3px;
}
.nx-name {
  margin-left: 2px;
  font: 13px "Liberation Sans", sans-serif;
  color: #9fd0f0;
}
.siemens {
  margin-left: auto;
  margin-right: 24px;
  font: 700 13px "Liberation Sans", sans-serif;
  letter-spacing: .3px;
  color: #e4e4e4;
}
.win-btn {
  display: flex;
  align-items: center;
  justify-content: center;
  width: 19px;
  height: 18px;
  margin-right: 4px;
  border-radius: 3px;
  background: linear-gradient(#5a5a5a, #333);
  border: 1px solid #111;
  box-sizing: border-box;
  color: #fff;
  font-size: 13px;
}
.win-btn.close {
  width: 20px;
  margin-right: 2px;
  background: linear-gradient(#f08868, #d83818);
}
.w-min {
  display: block;
  width: 7px;
  height: 2px;
  margin-top: 6px;
  background: #fff;
}
.w-max {
  display: block;
  width: 7px;
  height: 6px;
  border: 1px solid #fff;
  border-top-width: 2px;
  box-shadow: 2px -2px 0 -1px #fff;
}
.w-min.dark {
  background: #444;
}
.w-max.dark {
  border-color: #444;
  box-shadow: 2px -2px 0 -1px #444;
}

.menubar {
  display: flex;
  align-items: center;
  height: 23px;
  flex-shrink: 0;
  background: linear-gradient(#f2f2f2, #d4d4d4);
  border-bottom: 1px solid #fff;
  box-sizing: border-box;
}
.menu-ic {
  width: 18px;
  height: 18px;
  margin: 0 2px 0 2px;
}
.menu-item {
  flex-shrink: 0;
  white-space: nowrap;
}
.doc-btns {
  display: flex;
  gap: 3px;
  margin-left: auto;
  margin-right: 5px;
}
.doc-btn {
  display: flex;
  align-items: center;
  justify-content: center;
  width: 16px;
  height: 15px;
  border: 1px solid #666;
  border-radius: 3px;
  background: linear-gradient(#fafafa, #ddd);
  box-sizing: border-box;
  font-size: 11px;
}
.doc-btn.off {
  border-color: #ccc;
  color: #ccc;
}

.toolbar {
  display: flex;
  align-items: center;
  flex-shrink: 0;
}
.tb1 {
  height: 36px;
  background: linear-gradient(#e8e8e8, #cbcbcb);
  border-bottom: 2px solid #bdbdbd;
  box-sizing: border-box;
}
.tb2 {
  height: 27px;
  background: linear-gradient(#d2d2d2, #dadada);
}
.tb3 {
  height: 34px;
  background: linear-gradient(#e8e8e8, #cdcdcd);
}
.ti {
  display: flex;
  align-items: center;
  justify-content: center;
  flex-shrink: 0;
  height: 100%;
}
.ti svg {
  width: 22px;
  height: 22px;
  flex-shrink: 0;
}
.ti.label {
  justify-content: flex-start;
  padding-left: 1px;
  box-sizing: border-box;
}
.ti.handle,
.tiw8 {
  width: 8px;
}
.ti.handle::before {
  content: "";
  width: 3px;
  height: 24px;
  background: repeating-linear-gradient(#fff 0 2px, #999 2px 3px, transparent 3px 4px);
}
.ti.sep::before {
  content: "";
  width: 1px;
  height: 100%;
  background: #aaa;
  border-right: 1px solid #fff;
}
.ti.caret::before,
.caret-i {
  content: "";
  display: block;
  width: 0;
  height: 0;
  border: 4px solid transparent;
  border-top-color: #000;
  border-bottom: 0;
  margin-top: 4px;
}
.ti.caret.low::before {
  margin-top: 14px;
}
.ti.caret.grey::before {
  border-top-color: #8c8c8c;
}
.ti.more {
  flex-direction: column;
  justify-content: flex-start;
}
.ti.more b {
  font: 700 14px/14px "Liberation Sans", sans-serif;
  margin-top: 1px;
}
.ti.more .caret-i {
  margin-top: 7px;
}
.ti.search {
  justify-content: space-between;
  height: 21px;
  padding: 0 3px 0 2px;
  box-sizing: border-box;
  background: #fff;
  border: 1px solid #b4b4b4;
  color: #aaa;
  font-size: 13px;
}
.ti.search svg {
  width: 18px;
  height: 18px;
}
.ti.input {
  height: 14px;
  background: #dcdcdc;
  border: 1px solid #aaa;
  border-radius: 3px;
  box-sizing: border-box;
  box-shadow: inset 0 0 0 1px #f4f4f4;
}
.ti.active {
  height: 21px;
  background: #fff;
  border: 1px solid #555;
  border-radius: 3px;
  box-sizing: border-box;
}
.ti.active svg {
  width: 18px;
  height: 18px;
}

.main {
  display: flex;
  height: 561px;
  flex-shrink: 0;
}
.viewport {
  position: relative;
  width: 1040px;
  flex-shrink: 0;
  background: linear-gradient(178deg, #28292b 0, #4a4a4c 55%, #58585a 100%);
}
.scene {
  position: absolute;
  inset: 0;
  width: 100%;
  height: 100%;
}
.axis-t {
  font: 13px "Liberation Sans", sans-serif;
}
.axis-s {
  font: 9px "Liberation Sans", sans-serif;
}

.nav {
  display: flex;
  flex-direction: column;
  width: 296px;
  flex-shrink: 0;
  padding: 0 8px 5px 11px;
  box-sizing: border-box;
  background: #efefef;
  border-bottom: 1px solid #555;
}
.nav-title {
  display: flex;
  align-items: center;
  height: 32px;
  flex-shrink: 0;
  padding-left: 4px;
  font-size: 13px;
}
.nav-title b {
  font-weight: 700;
  white-space: pre;
}
.nav-dash {
  font-family: "Liberation Mono", monospace;
}
.nav-pin {
  width: 10px;
  height: 9px;
  margin-right: 12px;
  border: 1.5px solid #111;
  border-top-width: 2px;
}
.tree {
  display: flex;
  flex-direction: column;
  height: 463px;
  flex-shrink: 0;
  border: 1px solid #808080;
  box-sizing: border-box;
  background: #fff;
}
.tree-head {
  display: flex;
  height: 16px;
  flex-shrink: 0;
  line-height: 15px;
  color: #333;
  background: linear-gradient(#efefef 50%, #d0d0d0);
}
.th-name {
  width: 200px;
  padding-left: 6px;
  box-sizing: border-box;
  border-right: 2px solid #c4c4c4;
}
.th-tool {
  padding-left: 5px;
}
.tree-body {
  position: relative;
  flex: 1;
  overflow: hidden;
  min-height: 0;
}
.tr {
  height: 19px;
  border-bottom: 1px solid #e6e6e6;
}
.tr:nth-child(odd) {
  background: #f6f6f6;
}
.tree-rows {
  position: absolute;
  inset: 0;
}
.row-t {
  display: flex;
  align-items: center;
  height: 20px;
  padding-left: 3px;
  color: #222;
}
.row-t svg {
  width: 14px;
  height: 14px;
  flex-shrink: 0;
}
.row-t.p20 {
  padding-left: 20px;
}
.ml2 {
  margin-left: 2px;
}
.gap4 {
  margin-left: 4px;
}
.cn {
  line-height: 1;
}
.purple {
  color: #6030c8;
}
.row-t .drill {
  margin-left: 57px;
  width: 13px;
  height: 14px;
}
.sel {
  flex: 1;
  align-self: stretch;
  margin-left: 1px;
  padding-left: 3px;
  line-height: 19px;
  background: #0a78d6;
  color: #fff;
}
.tree-lines {
  position: absolute;
  left: 0;
  top: 0;
  width: 40px;
  height: 100px;
}
.col-line {
  position: absolute;
  left: 200px;
  top: 0;
  bottom: 0;
  width: 1px;
  background: #000;
}
.hscroll {
  display: flex;
  align-items: center;
  height: 17px;
  flex-shrink: 0;
  background: #f2f2f2;
  padding: 0 5px 0 4px;
}
.sb-left,
.sb-right,
.sb-up,
.sb-down {
  width: 6px;
  height: 6px;
  flex-shrink: 0;
  border: solid #666;
  border-width: 2px 0 0 2px;
  box-sizing: border-box;
  transform: rotate(-45deg);
}
.sb-right {
  margin-left: auto;
  transform: rotate(135deg);
}
.hthumb {
  width: 73px;
  height: 15px;
  margin-left: 7px;
  background: #c9c9c9;
}
.splitter {
  display: flex;
  align-items: center;
  gap: 5px;
  height: 14px;
  flex-shrink: 0;
}
.splitter i {
  flex: 1;
  height: 2px;
  background: #ccc;
}
.splitter span {
  width: 50px;
  height: 6px;
  background: #d4d4d4;
  border: 1px solid #aaa;
  box-sizing: border-box;
}

.sec {
  display: flex;
  align-items: center;
  height: 23px;
  flex-shrink: 0;
  padding-left: 6px;
  box-sizing: border-box;
  font-size: 13px;
  background: linear-gradient(#f8f8f8, #f2f2f2 48%, #dcdcdc 52%, #d6d6d6);
  border-bottom: 2px solid #888;
}
.sec b,
.sub b {
  flex: 1;
  color: #1a1a1a;
  font-weight: 700;
}
.sec-btn {
  position: relative;
  align-self: stretch;
  width: 22px;
  border-left: 1px solid #aaa;
  box-shadow: inset 1px 0 0 #fff;
}
.sec-btn::after {
  content: "";
  position: absolute;
  left: 7px;
  top: 9px;
  width: 8px;
  height: 8px;
  border: solid #666;
  border-width: 3px 0 0 3px;
  box-sizing: border-box;
  transform: rotate(45deg);
}
.sec-btn.down::after {
  top: 3px;
  transform: rotate(225deg);
}
.sec-btn.bare {
  border-left: 0;
  box-shadow: none;
}
.acc {
  padding-left: 6px;
  border-bottom-width: 1px;
}
.acc.a2 {
  height: 21px;
  margin-top: 1px;
}

.tabs {
  position: relative;
  display: flex;
  flex-direction: column;
  flex: 1;
  align-items: flex-start;
  background: #adadad;
  border-left: 1px solid #fff;
  box-sizing: border-box;
  border-bottom: 1px solid #555;
}
.tabs-gear {
  width: 18px;
  height: 18px;
  margin: 5px 0 23px 5px;
  flex-shrink: 0;
}
.tab {
  display: flex;
  align-items: center;
  justify-content: center;
  width: 25px;
  flex-shrink: 0;
  background: linear-gradient(90deg, #d4d4d4, #dedede);
  border: 1px solid #999;
  border-left: 0;
  border-radius: 0 6px 6px 0;
  box-sizing: border-box;
}
.tab svg {
  width: 24px;
  height: 24px;
  flex-shrink: 0;
}
.tab.on {
  width: 28px;
  background: #efefef;
  border-color: #ddd;
}
.tab.clock {
  align-items: flex-start;
  background: #d4d4d4;
}
.step {
  position: relative;
  width: 15px;
  height: 14px;
  margin: 2px 0 0 5px;
  background: linear-gradient(#f6f6f6, #dcdcdc);
  border: 1px solid #a8a8a8;
  box-sizing: border-box;
  flex-shrink: 0;
}
.step::after {
  content: "";
  position: absolute;
  left: 2px;
  top: 3px;
  border: 4.5px solid transparent;
  border-bottom-color: #666;
  border-top: 0;
}
.step.down::after,
.step.last::after {
  border-top: 4.5px solid #666;
  border-bottom: 0;
}
.step.first::before,
.step.last::before {
  content: "";
  position: absolute;
  left: 2px;
  width: 9px;
  height: 1px;
  top: 2px;
  background: #666;
}
.step.last::before {
  top: 9px;
}

.status {
  display: flex;
  height: 21px;
  flex-shrink: 0;
  background: linear-gradient(#ebebeb, #d8d8d8);
  border-top: 1px solid #fff;
  box-sizing: border-box;
}
.st {
  display: flex;
  align-items: center;
  justify-content: center;
  border-right: 1px solid #fff;
  box-sizing: border-box;
}
.s1 {
  width: 636px;
}
.s2 {
  width: 636px;
}
.s3 {
  width: 76px;
  padding-right: 14px;
}
.s3 svg {
  width: 16px;
  height: 16px;
}
.taskbar {
  position: relative;
  flex: 1;
  background: #0b1a20;
  overflow: hidden;
}
.task-tab {
  display: block;
  width: 49px;
  height: 100%;
  margin-left: 294px;
  background: #2f363a;
}
.clock-t {
  position: absolute;
  left: 1261px;
  top: 2px;
  color: #fff;
  font: 12px "Liberation Sans", sans-serif;
}

.dialog {
  position: absolute;
  left: 64px;
  top: 0;
  display: flex;
  flex-direction: column;
  width: 306px;
  height: 727px;
  border-radius: 7px;
  background: #111;
  overflow: hidden;
}
.dlg-head {
  display: flex;
  align-items: center;
  height: 22px;
  flex-shrink: 0;
  color: #fff;
}
.dlg-gear {
  display: flex;
  align-items: center;
  justify-content: center;
  width: 22px;
  height: 100%;
  border-right: 1px solid #777;
  box-sizing: border-box;
}
.dlg-gear svg {
  width: 15px;
  height: 15px;
}
.dlg-title {
  flex: 1;
  padding-left: 9px;
  font: 700 13px "Liberation Mono", "Noto Sans CJK SC", monospace;
  white-space: nowrap;
  overflow: hidden;
}
.dt-cn {
  font: 700 14px "Noto Sans CJK SC", sans-serif;
}
.dlg-close {
  width: 20px;
  height: 100%;
  line-height: 22px;
  text-align: center;
  border-left: 1px solid #777;
  box-sizing: border-box;
  font: 700 15px/22px "DejaVu Sans", sans-serif;
}
.dlg-body {
  display: flex;
  flex-direction: column;
  height: 698px;
  flex-shrink: 0;
  padding: 4px 0 0 7px;
  box-sizing: border-box;
  background: #e9e9e9;
}
.dlg-mid {
  display: flex;
  gap: 2px;
  height: 655px;
  flex-shrink: 0;
}
.dlg-scroll {
  width: 276px;
  height: 100%;
  background: #d0d0d0;
  overflow: hidden;
  flex-shrink: 0;
}
.group {
  display: flex;
  flex-direction: column;
  gap: 4px;
  padding: 7px 9px 10px 8px;
}
.g-first {
  gap: 3px;
  padding-top: 3px;
}
.g3 {
  gap: 3px;
}
.row {
  display: flex;
  align-items: flex-start;
  gap: 4px;
  flex-shrink: 0;
}
.row.mid {
  align-items: center;
}
.h31 {
  height: 31px;
}
.h30 {
  height: 30px;
}
.h18 {
  height: 18px;
}
.h16 {
  height: 16px;
}
.lab {
  display: flex;
  align-items: center;
  flex: 1;
  min-width: 0;
  height: 18px;
  line-height: 18px;
}
.tick {
  width: 18px;
  height: 18px;
  margin: 0 3px 0 -1px;
}
.btn {
  display: flex;
  align-items: center;
  justify-content: center;
  width: 30px;
  height: 30px;
  flex-shrink: 0;
  border: 1px solid #5c5c5c;
  border-radius: 4px;
  box-sizing: border-box;
  background: linear-gradient(#fbfbfb, #e4e4e4 50%, #d0d0d0);
}
.btn svg {
  width: 25px;
  height: 25px;
  flex-shrink: 0;
}
.btn.off {
  border-color: #b8b8b8;
  background: linear-gradient(#f4f4f4, #dcdcdc);
}
.btn.sm {
  width: 22px;
  height: 22px;
}
.btn.sm svg {
  width: 18px;
  height: 18px;
}
.btn.split {
  position: relative;
  width: 47px;
  justify-content: flex-start;
  padding-left: 2px;
  overflow: hidden;
}
.split-arrow {
  position: absolute;
  right: 0;
  top: 0;
  bottom: 0;
  width: 15px;
  background: linear-gradient(#2f6db8, #a8d4f8);
}
.split-arrow::after {
  content: "";
  position: absolute;
  left: 3px;
  top: 12px;
  border: 5px solid transparent;
  border-top: 5px solid #000;
  border-bottom: 0;
}
.sel-box {
  position: relative;
  display: block;
  height: 18px;
  flex-shrink: 0;
  padding: 0 18px 0 4px;
  box-sizing: border-box;
  background: #fff;
  border: 1px solid #555;
  border-radius: 4px;
  line-height: 16px;
  white-space: nowrap;
  overflow: hidden;
}
.sel-box::after {
  content: "";
  position: absolute;
  right: 0;
  top: 0;
  bottom: 0;
  width: 16px;
  background: linear-gradient(#2f6db8, #a8d4f8);
}
.sel-box::before {
  content: "";
  position: absolute;
  z-index: 1;
  right: 3px;
  top: 4px;
  border: 5px solid transparent;
  border-top: 7px solid #111;
  border-bottom: 0;
}
.w106 {
  width: 106px;
}
.w85 {
  width: 85px;
}
.num {
  width: 56px;
  height: 16px;
  padding-left: 14px;
  box-sizing: border-box;
  background: #fff;
  border: 1px solid #555;
  border-radius: 4px;
  line-height: 14px;
  overflow: hidden;
}
.sub {
  display: flex;
  align-items: center;
  height: 22px;
  padding-left: 8px;
  box-sizing: border-box;
  background: #bdbdbd;
  border-top: 1px solid #808080;
  border-left: 1px solid #808080;
  border-bottom: 1px solid #f0f0f0;
  border-right: 1px solid #f0f0f0;
  font-size: 13px;
}
.sub .sec-btn {
  height: 100%;
}
.dlg-sb {
  display: flex;
  flex-direction: column;
  align-items: center;
  width: 15px;
  height: 100%;
  flex-shrink: 0;
}
.sb-up {
  margin-top: 8px;
  transform: rotate(45deg);
}
.sb-down {
  margin-top: auto;
  margin-bottom: 6px;
  transform: rotate(225deg);
}
.sb-thumb {
  width: 15px;
  height: 430px;
  margin-top: 42px;
  background: #cdcdcd;
}
.dlg-foot {
  display: flex;
  justify-content: flex-end;
  align-items: flex-start;
  gap: 7px;
  flex: 1;
  margin-top: 3px;
  padding: 5px 16px 0 0;
  border-top: 1px solid #bbb;
  box-shadow: inset 0 1px 0 #fff;
}
.act {
  width: 52px;
  height: 18px;
  line-height: 16px;
  text-align: center;
  border: 1px solid #666;
  border-radius: 4px;
  box-sizing: border-box;
  background: linear-gradient(#f8f8f8, #e0e0e0 50%, #c8c8c8);
}
.act.ok {
  border-color: #4a8a4a;
  background: linear-gradient(#d8f8c8, #a0e880 50%, #70c858);
}

.handle-float {
  position: absolute;
  left: 1356px;
  top: 430px;
  width: 8px;
  height: 57px;
  padding-top: 40px;
  box-sizing: border-box;
  border-radius: 4px;
  background: #444;
}
.handle-float i {
  display: block;
  width: 6px;
  height: 14px;
  margin-left: 1px;
  background: repeating-linear-gradient(#30d030 0 1px, #1a6a1a 1px 2px);
}

.watermark {
  position: absolute;
  left: 1083px;
  top: 643px;
  display: flex;
  gap: 18px;
  pointer-events: none;
}
.wm-logo {
  width: 62px;
  height: 80px;
}
.wm-text {
  display: flex;
  flex-direction: column;
  align-items: flex-start;
  color: rgba(255, 255, 255, .58);
}
.wm-big {
  margin-top: 8px;
  height: 48px;
  font-size: 41px;
  font-weight: 500;
  line-height: 44px;
  white-space: nowrap;
}
.wm-small {
  font: 12px/14px "Liberation Sans", sans-serif;
  letter-spacing: 3px;
  white-space: nowrap;
  color: rgba(255, 255, 255, .7);
}
</style>
